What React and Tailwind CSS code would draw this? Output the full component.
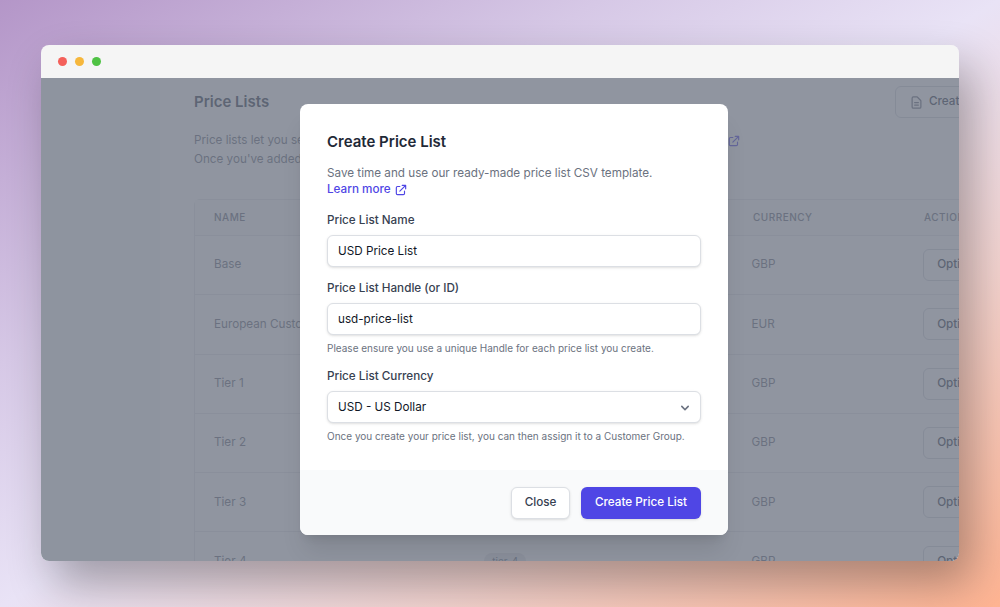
import { HiOutlineExternalLink, HiOutlineDocumentText, HiChevronDown } from "react-icons/hi";

const rows = [
  { name: "Base", handle: "base", currency: "GBP" },
  { name: "European Customers", handle: "european", currency: "EUR" },
  { name: "Tier 1", handle: "tier-1", currency: "GBP" },
  { name: "Tier 2", handle: "tier-2", currency: "GBP" },
  { name: "Tier 3", handle: "tier-3", currency: "GBP" },
  { name: "Tier 4", handle: "tier-4", currency: "GBP" },
];

function Field({ label, hint, children }) {
  return (
    <div className="mt-[13px]">
      <div className="text-[11.7px] leading-[17px] font-medium text-[#374151]">{label}</div>
      {children}
      {hint && <p className="mt-[7px] mb-[14px] text-[10px] leading-[12px] text-[#6b7280]">{hint}</p>}
    </div>
  );
}

function Input({ value, chevron }) {
  return (
    <div className="mt-[6px] flex h-[32px] items-center justify-between rounded-md border border-[#dcdfe4] bg-white pl-[10px] pr-[7px] pt-[2px] text-[11.7px] text-[#111827] shadow-sm">
      <span>{value}</span>
      {chevron && <HiChevronDown className="h-[16px] w-[16px] text-[#6b7280]" />}
    </div>
  );
}

export default function App() {
  return (
    <div className="h-[607px] w-[1000px] overflow-hidden bg-[linear-gradient(to_bottom_right,#b496c8_0%,#d6c8e6_30%,#e9e3f6_50%,#f4d4d0_72%,#ffb492_100%)] pl-[41px] pt-[45px] font-['Inter',sans-serif]">
      <div className="flex h-[516px] w-[918px] flex-col overflow-hidden rounded-lg shadow-[12px_22px_45px_rgba(0,0,0,0.32)]">
        <div className="flex h-[33px] shrink-0 items-center gap-[8px] bg-[#f5f5f5] pl-[17px]">
          <span className="h-[9px] w-[9px] rounded-full bg-[#f4605a]" />
          <span className="h-[9px] w-[9px] rounded-full bg-[#f6b73c]" />
          <span className="h-[9px] w-[9px] rounded-full bg-[#4fc244]" />
        </div>

        <div className="relative flex min-h-0 flex-1 overflow-hidden bg-white">
          <div className="w-[119px] shrink-0 bg-[#f6fafa]" />

          <div className="min-w-0 flex-1 pl-[34px]">
            <div className="flex h-[48px] w-[821px] items-center justify-between">
              <h1 className="text-[15px] font-semibold text-[#374151]">Price Lists</h1>
              <div className="flex h-[32px] w-[120px] items-center gap-[5px] rounded-md border border-[#d1d5db] pl-[13px] text-[11.7px] font-medium text-[#374151]">
                <HiOutlineDocumentText className="h-[15px] w-[15px] text-[#6b7280]" />
                Create
              </div>
            </div>

            <div className="mt-[5px] text-[11.7px] leading-[19px] whitespace-nowrap text-[#6b7280]">
              <div className="flex w-[547px] items-center justify-between">
                <span>Price lists let you set specific prices for your products and assign them.</span>
                <HiOutlineExternalLink className="h-[14px] w-[14px] text-[#4f46e5]" />
              </div>
              <div>Once you've added a price list you can start adding prices.</div>
            </div>

            <div className="mt-[30px] w-[800px] rounded-md border border-[#e5e7eb]">
              <div className="flex h-[35px] items-center bg-[#f9fafb] pl-[19px] text-[10px] font-medium tracking-wider text-[#6b7280]">
                <span className="w-[271px]">NAME</span>
                <span className="w-[268px]">HANDLE</span>
                <span className="w-[171px]">CURRENCY</span>
                <span>ACTIONS</span>
              </div>
              {rows.map((row) => (
                <div key={row.name} className="flex h-[59.3px] items-center border-t border-[#e5e7eb] pl-[19px] text-[11.7px] text-[#6b7280]">
                  <span className="w-[271px]">{row.name}</span>
                  <span className="w-[268px]">
                    <span className="rounded-full bg-[#e5e7eb] px-[8px] py-[2px] text-[10px]">{row.handle}</span>
                  </span>
                  <span className="w-[172px]">{row.currency}</span>
                  <span className="flex h-[32px] w-[70px] items-center rounded-md border border-[#d1d5db] pl-[13px] font-medium text-[#374151]">Options</span>
                </div>
              ))}
            </div>
          </div>

          <div className="absolute inset-0 bg-[#6b7280]/75" />

          <div className="absolute left-[259px] top-[26px] flex h-[431px] w-[428px] flex-col overflow-hidden rounded-lg bg-white shadow-xl">
            <div className="flex-1 px-[27px] pt-[28px]">
              <h2 className="text-[15px] leading-[20px] font-semibold text-[#1f2937]">Create Price List</h2>
              <p className="mt-[13px] text-[11.7px] leading-[16px] text-[#6b7280]">Save time and use our ready-made price list CSV template.</p>
              <a className="mb-[14px] flex items-center gap-[3px] text-[11.7px] leading-[17px] font-medium text-[#4f46e5]">
                Learn more
                <HiOutlineExternalLink className="h-[14px] w-[14px]" />
              </a>
              <Field label="Price List Name">
                <Input value="USD Price List" />
              </Field>
              <Field label="Price List Handle (or ID)" hint="Please ensure you use a unique Handle for each price list you create.">
                <Input value="usd-price-list" />
              </Field>
              <Field label="Price List Currency" hint="Once you create your price list, you can then assign it to a Customer Group.">
                <Input value="USD - US Dollar" chevron />
              </Field>
            </div>
            <div className="flex h-[65px] shrink-0 items-center justify-end gap-[11px] bg-[#f9fafb] pr-[27px]">
              <button className="h-[32px] w-[59px] rounded-md border border-[#dcdfe4] bg-white text-[11.7px] font-medium text-[#374151] shadow-sm">Close</button>
              <button className="h-[32px] w-[120px] rounded-md bg-[#4f46e5] text-[11.7px] font-medium text-white shadow-sm">Create Price List</button>
            </div>
          </div>
        </div>
      </div>
    </div>
  );
}
